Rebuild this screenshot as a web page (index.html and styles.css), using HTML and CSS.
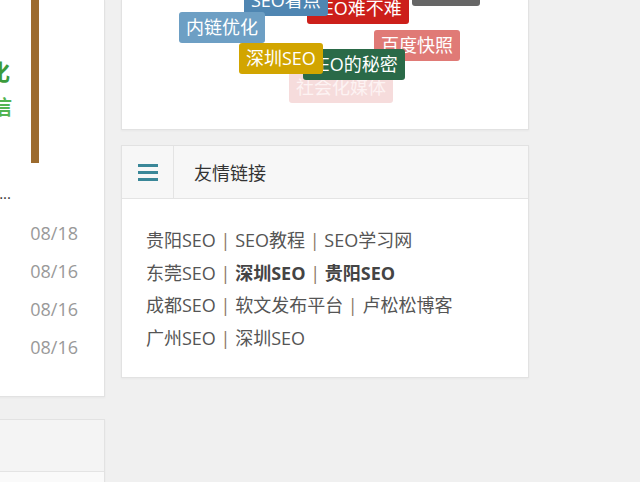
FILE: index.html
```html
<!DOCTYPE html>
<html lang="zh-CN">
<head>
    <meta charset="UTF-8">
    <meta name="viewport" content="width=device-width, initial-scale=1.0">
    <title>友情链接</title>
    <link rel="stylesheet" href="styles.css">
</head>
<body>
    <div class="page">
        <!-- 左栏 -->
        <div class="side-left">
            <div class="box box-news">
                <div class="thumb">
                    <div class="thumb-big">网站优化</div>
                    <div class="thumb-small">微信</div>
                </div>
                <div class="news-title">网站优化排名的技巧...</div>
                <ul class="news-list">
                    <li><span class="news-name">如何做好网站SEO</span><span class="news-date">08/18</span></li>
                    <li><span class="news-name">关键词排名优化</span><span class="news-date">08/16</span></li>
                    <li><span class="news-name">外链建设的方法</span><span class="news-date">08/16</span></li>
                    <li><span class="news-name">网站内容更新</span><span class="news-date">08/16</span></li>
                </ul>
            </div>
            <div class="box box-next">
                <div class="box-head-plain"></div>
            </div>
        </div>

        <!-- 右栏 -->
        <div class="side-right">
            <div class="box box-tags">
                <div class="cloud">
                    <a class="tag tag-grey" style="left:290px;top:-25px">关键词</a>
                    <a class="tag tag-red" style="left:185px;top:-7px">SEO难不难</a>
                    <a class="tag tag-blue" style="left:122px;top:-15px">SEO看点</a>
                    <a class="tag tag-light" style="left:57px;top:12px">内链优化</a>
                    <a class="tag tag-salmon" style="left:252px;top:30px">百度快照</a>
                    <a class="tag tag-pink" style="left:167px;top:72px">社会化媒体</a>
                    <a class="tag tag-green" style="left:181px;top:49px">SEO的秘密</a>
                    <a class="tag tag-gold" style="left:117px;top:43px">深圳SEO</a>
                </div>
            </div>

            <div class="box box-links">
                <div class="box-head">
                    <div class="head-icon">
                        <svg width="20" height="17" viewBox="0 0 20 17">
                            <rect x="0" y="0" width="20" height="3" fill="#3a8798"/>
                            <rect x="0" y="7" width="20" height="3" fill="#3a8798"/>
                            <rect x="0" y="14" width="20" height="3" fill="#3a8798"/>
                        </svg>
                    </div>
                    <h3 class="head-title">友情链接</h3>
                </div>
                <div class="links">
                    <a>贵阳SEO</a> <span class="sep">|</span> <a>SEO教程</a> <span class="sep">|</span> <a>SEO学习网</a><br>
                    <a>东莞SEO</a> <span class="sep">|</span> <a class="strong">深圳SEO</a> <span class="sep">|</span> <a class="strong">贵阳SEO</a><br>
                    <a>成都SEO</a> <span class="sep">|</span> <a>软文发布平台</a> <span class="sep">|</span> <a>卢松松博客</a><br>
                    <a>广州SEO</a> <span class="sep">|</span> <a>深圳SEO</a>
                </div>
            </div>
        </div>
    </div>
</body>
</html>
```

FILE: styles.css
```css
* {
    box-sizing: border-box;
    margin: 0;
    padding: 0;
}

body {
    font-family: "Open Sans", "Noto Sans CJK SC", sans-serif;
    font-size: 18px;
    color: #555;
    background-color: #f0f0f0;
    overflow: hidden;
}

a {
    color: #555;
    text-decoration: none;
}

.page {
    display: flex;
    gap: 16px;
    margin-left: -215px;
    align-items: flex-start;
}

.side-left {
    width: 320px;
}

.side-right {
    width: 408px;
}

.box {
    background: #fff;
    border: 1px solid #e2e2e2;
    box-shadow: 0 1px 2px rgba(0,0,0,0.04);
}

/* 左栏 */
.box-news {
    border-top: none;
    padding: 0 26px 30px 20px;
}

.thumb {
    height: 163px;
    width: 233px;
    border-right: 8px solid #9c6b2e;
    overflow: hidden;
    text-align: right;
    padding: 54px 0 0;
    white-space: nowrap;
}

.thumb-big {
    font-size: 22px;
    font-weight: bold;
    color: #3b9b3b;
    margin-right: 21px;
}

.thumb-small {
    font-size: 20px;
    font-weight: bold;
    color: #52b452;
    margin-top: 6px;
    margin-right: 19px;
}

.news-title {
    width: 205px;
    margin-top: 20px;
    font-size: 15px;
    color: #333;
    text-align: right;
    white-space: nowrap;
    overflow: hidden;
    line-height: 20px;
}

.news-list {
    list-style: none;
    margin-top: 11px;
}

.news-list li {
    display: flex;
    justify-content: space-between;
    height: 38px;
    line-height: 38px;
}

.news-name {
    width: 180px;
    color: #555;
    white-space: nowrap;
    overflow: hidden;
}

.news-date {
    color: #999;
}

.box-next {
    margin-top: 22px;
    height: 120px;
    background: #fafafa;
}

.box-head-plain {
    height: 52px;
    background: #f4f4f4;
    border-bottom: 1px solid #e4e4e4;
}

/* 标签云 */
.box-tags {
    height: 131px;
    margin-top: -1px;
    margin-bottom: 15px;
}

.cloud {
    position: relative;
    height: 100%;
}

.tag {
    position: absolute;
    height: 31px;
    line-height: 31px;
    padding: 0 7px;
    border-radius: 3px;
    color: #fff;
    white-space: nowrap;
}

.tag-grey { background: #666; }
.tag-red { background: #cc1f1a; }
.tag-blue { background: #4f86b2; }
.tag-light { background: #6d9fc4; }
.tag-salmon { background: #e07a76; }
.tag-pink { background: #f6dcdc; color: #fdf3f3; }
.tag-green { background: #2a6a48; }
.tag-gold { background: #d2a500; }

/* 友情链接 */
.box-head {
    display: flex;
    align-items: center;
    height: 53px;
    background: #f7f7f7;
    border-bottom: 1px solid #e4e4e4;
}

.head-icon {
    width: 52px;
    height: 100%;
    border-right: 1px solid #e4e4e4;
    display: flex;
    align-items: center;
    justify-content: center;
}

.head-icon svg {
    display: block;
}

.head-title {
    padding-left: 20px;
    font-size: 18px;
    font-weight: normal;
    color: #333;
}

.links {
    padding: 25px 24px 23px;
    line-height: 32.5px;
}

.links .strong {
    font-weight: bold;
    color: #444;
}

.sep {
    color: #8a7866;
}
```
